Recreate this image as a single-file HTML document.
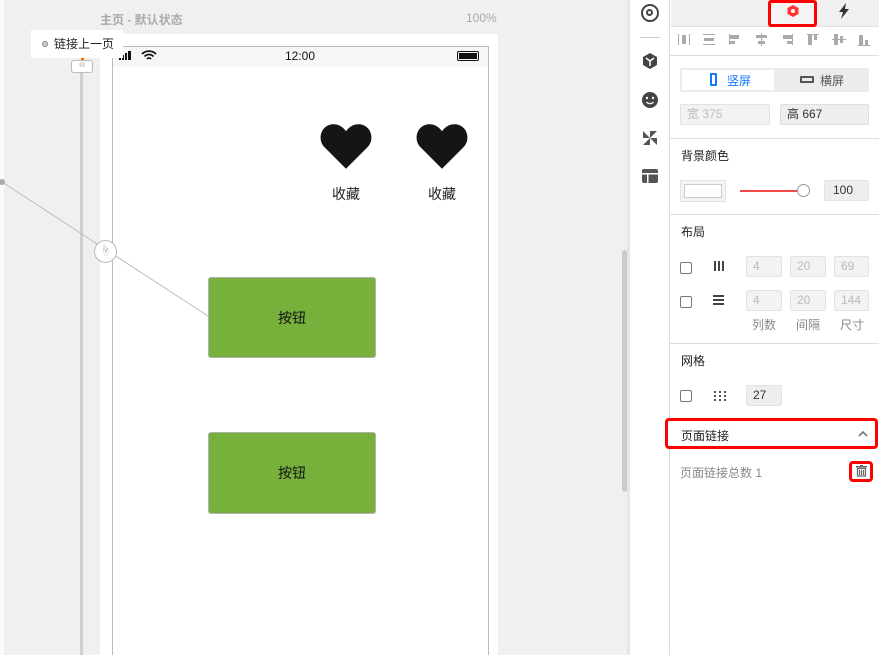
<!DOCTYPE html>
<html><head><meta charset="utf-8"><style>
*{box-sizing:border-box;margin:0;padding:0}
html,body{width:879px;height:655px;overflow:hidden}
body{background:#f0f0f0;font-family:"Liberation Sans","Noto Sans CJK SC",sans-serif;position:relative;font-size:12px;color:#333}
.a{position:absolute;white-space:nowrap}
.inp{position:absolute;height:21px;border:1px solid #e2e2e2;background:#f3f3f3;border-radius:2px;color:#bbb;font-size:12px;padding-left:6px;line-height:19px}
.cb{position:absolute;width:12px;height:12px;border:1px solid #777;border-radius:2px;background:#fff}
.hr{position:absolute;left:670px;width:209px;height:1px;background:#ddd}
.ttl{position:absolute;left:681px;font-size:12px;color:#222}
</style></head><body>
<div class="a" style="left:0;top:0;width:4px;height:655px;background:#fafafa"></div>
<div class="a" style="left:80px;top:60px;width:3px;height:595px;background:#cfcfcf"></div>
<div class="a" style="left:71px;top:60px;width:22px;height:13px;border:1px solid #bbb;border-radius:3px;background:#fff;font-size:7px;color:#aaa;text-align:center;line-height:10px">III</div>
<div class="a" style="left:81px;top:57px;width:3px;height:3px;background:#f60"></div>
<div class="a" style="left:100px;top:11px;font-size:12px;color:#aaa;font-weight:bold">主页 - 默认状态</div>
<div class="a" style="left:466px;top:11px;font-size:12px;color:#aaa">100%</div>
<div class="a" style="left:100px;top:34px;width:398px;height:621px;background:#fff"></div>
<div class="a" style="left:31px;top:30px;height:28px;background:#fff;font-size:12px;color:#222;line-height:28px;padding:0 9px 0 23px;z-index:5">链接上一页</div>
<div class="a" style="left:42px;top:41px;width:6px;height:6px;border-radius:50%;border:1px solid #888;background:#ccc;z-index:6"></div>
<div class="a" style="left:112px;top:46px;width:377px;height:615px;border:1px solid #b8bcc2;background:#fff"></div>
<div class="a" style="left:113px;top:47px;width:375px;height:20px;background:#f6f6f6"></div>
<div class="a" style="left:285px;top:49px;font-size:12px;color:#111">12:00</div>
<svg class="a" style="left:118px;top:50px" width="44" height="12"><rect x="1" y="7" width="2" height="3" fill="#111"/><rect x="4" y="5" width="2" height="5" fill="#111"/><rect x="7" y="3" width="2" height="7" fill="#111"/><rect x="10" y="1" width="3" height="9" fill="#111"/><path d="M24 4a10 10 0 0 1 14 0M26.5 6.5a6 6 0 0 1 9 0M29 9a2.5 2.5 0 0 1 4 0" stroke="#111" stroke-width="1.8" fill="none"/></svg>
<div class="a" style="left:457px;top:51px;width:22px;height:10px;border:1px solid #111;border-radius:2px;padding:1px"><div style="width:100%;height:100%;background:#111"></div></div>
<svg class="a" style="left:318px;top:121px" width="56" height="50" viewBox="0 0 24 22"><path d="M12 21L2.5 11.5C-0.5 8.5 0.5 2.5 5.5 1.5 8.5 1 10.5 2.5 12 4.5 13.5 2.5 15.5 1 18.5 1.5 23.5 2.5 24.5 8.5 21.5 11.5Z" fill="#151515"/></svg>
<svg class="a" style="left:414px;top:121px" width="56" height="50" viewBox="0 0 24 22"><path d="M12 21L2.5 11.5C-0.5 8.5 0.5 2.5 5.5 1.5 8.5 1 10.5 2.5 12 4.5 13.5 2.5 15.5 1 18.5 1.5 23.5 2.5 24.5 8.5 21.5 11.5Z" fill="#151515"/></svg>
<div class="a" style="left:332px;top:184px;font-size:14px;color:#222">收藏</div>
<div class="a" style="left:428px;top:184px;font-size:14px;color:#222">收藏</div>
<svg class="a" style="left:0;top:170px" width="220" height="150"><line x1="2" y1="12" x2="208" y2="146" stroke="#bbb" stroke-width="1"/><circle cx="2" cy="12" r="3" fill="#aaa"/></svg>
<div class="a" style="left:94px;top:240px;width:23px;height:23px;border-radius:50%;border:1px solid #bbb;background:#fff;font-size:11px;text-align:center;line-height:20px;color:#aaa">☝</div>
<div class="a" style="left:208px;top:277px;width:168px;height:81px;background:#77b13b;border:1px solid #b0b0b0;border-radius:3px;text-align:center;line-height:80px;font-size:14px;color:#111">按钮</div>
<div class="a" style="left:208px;top:432px;width:168px;height:82px;background:#77b13b;border:1px solid #b0b0b0;border-radius:3px;text-align:center;line-height:80px;font-size:14px;color:#111">按钮</div>
<div class="a" style="left:622px;top:250px;width:5px;height:242px;background:#c9c9d1;border-radius:3px"></div>
<div class="a" style="left:627px;top:0;width:3px;height:655px;background:#e6e6e6"></div>
<div class="a" style="left:630px;top:0;width:249px;height:655px;background:#fff"></div>
<div class="a" style="left:630px;top:0;width:40px;height:655px;background:#fff;border-right:1px solid #ddd"></div>
<div class="a" style="left:641px;top:4px;width:18px;height:18px;border-radius:50%;border:2.5px solid #444"><div style="margin:3px;width:7px;height:7px;border-radius:50%;border:2px solid #444"></div></div>
<div class="a" style="left:640px;top:37px;width:20px;height:1px;background:#ccc"></div>
<svg class="a" style="left:641px;top:52px" width="18" height="18"><path d="M9 1L16 5V13L9 17L2 13V5Z" fill="#444"/><path d="M5 6L9 9L13 6M9 9V14" stroke="#fff" stroke-width="1.5" fill="none"/></svg>
<svg class="a" style="left:641px;top:91px" width="18" height="18"><circle cx="9" cy="9" r="8" fill="#444"/><circle cx="6" cy="7" r="1.2" fill="#fff"/><circle cx="12" cy="7" r="1.2" fill="#fff"/><path d="M5.5 11a4 3 0 0 0 7 0" stroke="#fff" stroke-width="1.3" fill="none"/></svg>
<svg class="a" style="left:641px;top:129px" width="18" height="18"><path d="M2 2L9 9L2 9ZM16 2L9 9V2ZM16 16L9 9H16ZM2 16L9 9V16Z" fill="#555"/></svg>
<svg class="a" style="left:641px;top:167px" width="18" height="18"><rect x="1" y="2" width="16" height="14" rx="2" fill="#555"/><rect x="1" y="6" width="16" height="1.5" fill="#fff"/><rect x="6" y="7" width="1.5" height="9" fill="#fff"/></svg>
<div class="a" style="left:671px;top:0;width:208px;height:27px;background:#f0f0f0;border-bottom:1px solid #e0e0e0"></div>
<div class="a" style="left:768px;top:0;width:49px;height:27px;border:3px solid #f00;border-radius:3px;background:#f4f4f4"></div>
<svg class="a" style="left:787px;top:5px" width="12" height="12"><path d="M6 0L11.5 3V9L6 12L0.5 9V3Z" fill="#f33"/><circle cx="6" cy="6" r="2" fill="#fff"/></svg>
<svg class="a" style="left:838px;top:3px" width="12" height="16"><path d="M8 0L1 9H5L3 16L11 6H7Z" fill="#333"/></svg>
<svg class="a" style="left:676px;top:32px" width="200" height="16" fill="#aaa">
<g><rect x="2" y="2" width="1" height="11"/><rect x="13" y="2" width="1" height="11"/><rect x="6" y="3" width="4" height="9"/></g>
<g transform="translate(25,0)"><rect x="2" y="2" width="12" height="1"/><rect x="2" y="12" width="12" height="1"/><rect x="3" y="6" width="10" height="3"/></g>
<g transform="translate(51,0)"><rect x="2" y="2" width="1" height="11"/><rect x="3" y="3" width="9" height="4"/><rect x="3" y="9" width="5" height="3"/></g>
<g transform="translate(78,0)"><rect x="7" y="1" width="1" height="13"/><rect x="2" y="3" width="11" height="3"/><rect x="4" y="9" width="7" height="3"/></g>
<g transform="translate(103,0)"><rect x="13" y="2" width="1" height="11"/><rect x="4" y="3" width="9" height="4"/><rect x="8" y="9" width="5" height="3"/></g>
<g transform="translate(129,0)"><rect x="2" y="2" width="12" height="1"/><rect x="3" y="3" width="4" height="10"/><rect x="9" y="3" width="3" height="5"/></g>
<g transform="translate(155,0)"><rect x="1" y="7" width="14" height="1"/><rect x="3" y="2" width="4" height="11"/><rect x="9" y="4" width="3" height="7"/></g>
<g transform="translate(180,0)"><rect x="2" y="13" width="12" height="1"/><rect x="3" y="3" width="4" height="10"/><rect x="9" y="8" width="3" height="5"/></g>
</svg>
<div class="hr" style="top:55px"></div>
<div class="a" style="left:680px;top:68px;width:189px;height:24px;background:#ececec;border-radius:2px"></div>
<div class="a" style="left:682px;top:70px;width:92px;height:20px;background:#fff"></div>
<div class="a" style="left:710px;top:73px;width:7px;height:13px;border:2px solid #1677ff;border-radius:1px"></div>
<div class="a" style="left:727px;top:72px;color:#1677ff;font-size:12px">竖屏</div>
<div class="a" style="left:800px;top:76px;width:14px;height:7px;border:2px solid #555;border-radius:1px"></div>
<div class="a" style="left:820px;top:72px;color:#555;font-size:12px">横屏</div>
<div class="inp" style="left:680px;top:104px;width:90px;color:#bbb">宽 375</div>
<div class="inp" style="left:780px;top:104px;width:89px;color:#333;background:#eee;border-color:#ddd">高 667</div>
<div class="hr" style="top:138px"></div>
<div class="ttl" style="top:147px">背景颜色</div>
<div class="a" style="left:680px;top:180px;width:46px;height:22px;border:1px solid #e2e2e2;background:#f4f4f4;padding:3px"><div style="width:100%;height:100%;background:#fff;border:1px solid #ccc"></div></div>
<div class="a" style="left:740px;top:190px;width:60px;height:2px;background:#f34949"></div>
<div class="a" style="left:797px;top:184px;width:13px;height:13px;border-radius:50%;border:1px solid #999;background:#fff"></div>
<div class="inp" style="left:824px;top:180px;width:45px;color:#333;background:#eee;padding-left:8px;line-height:19px">100</div>
<div class="hr" style="top:214px"></div>
<div class="ttl" style="top:223px">布局</div>
<div class="cb" style="left:680px;top:262px"></div>
<svg class="a" style="left:713px;top:261px" width="12" height="10" fill="#444"><rect x="1" y="0" width="2" height="10"/><rect x="5" y="0" width="2" height="10"/><rect x="9" y="0" width="2" height="10"/></svg>
<div class="inp" style="left:746px;top:256px;width:36px">4</div>
<div class="inp" style="left:790px;top:256px;width:36px">20</div>
<div class="inp" style="left:834px;top:256px;width:35px">69</div>
<div class="cb" style="left:680px;top:296px"></div>
<svg class="a" style="left:713px;top:295px" width="12" height="10" fill="#444"><rect x="0" y="0" width="11" height="2"/><rect x="0" y="4" width="11" height="2"/><rect x="0" y="8" width="11" height="2"/></svg>
<div class="inp" style="left:746px;top:290px;width:36px">4</div>
<div class="inp" style="left:790px;top:290px;width:36px">20</div>
<div class="inp" style="left:834px;top:290px;width:35px">144</div>
<div class="a" style="left:752px;top:316px;color:#888;font-size:12px">列数</div>
<div class="a" style="left:796px;top:316px;color:#888;font-size:12px">间隔</div>
<div class="a" style="left:840px;top:316px;color:#888;font-size:12px">尺寸</div>
<div class="hr" style="top:343px"></div>
<div class="ttl" style="top:352px">网格</div>
<div class="cb" style="left:680px;top:390px"></div>
<svg class="a" style="left:714px;top:390px" width="12" height="12" fill="#555"><rect x="0" y="1" width="2" height="2"/><rect x="5" y="1" width="2" height="2"/><rect x="10" y="1" width="2" height="2"/><rect x="0" y="5" width="2" height="2"/><rect x="5" y="5" width="2" height="2"/><rect x="10" y="5" width="2" height="2"/><rect x="0" y="9" width="2" height="2"/><rect x="5" y="9" width="2" height="2"/><rect x="10" y="9" width="2" height="2"/></svg>
<div class="inp" style="left:746px;top:385px;width:36px;color:#333;background:#eee">27</div>
<div class="a" style="left:665px;top:418px;width:213px;height:31px;border:3px solid #f00;border-radius:4px;background:#fff"></div>
<div class="a" style="left:681px;top:427px;font-size:12px;color:#222">页面链接</div>
<svg class="a" style="left:858px;top:431px" width="10" height="6"><path d="M1 5L5 1L9 5" stroke="#777" stroke-width="1.6" fill="none"/></svg>
<div class="a" style="left:680px;top:464px;font-size:12px;color:#888">页面链接总数 1</div>
<div class="a" style="left:849px;top:461px;width:24px;height:21px;border:3px solid #f00;border-radius:4px"></div>
<svg class="a" style="left:856px;top:465px" width="11" height="12"><rect x="0" y="1" width="11" height="1.5" fill="#666"/><rect x="4" y="0" width="3" height="1.5" fill="#666"/><path d="M1.5 3.5H9.5V11H1.5Z M3.5 5V10M5.5 5V10M7.5 5V10" stroke="#666" stroke-width="1.2" fill="none"/></svg>
</body></html>
